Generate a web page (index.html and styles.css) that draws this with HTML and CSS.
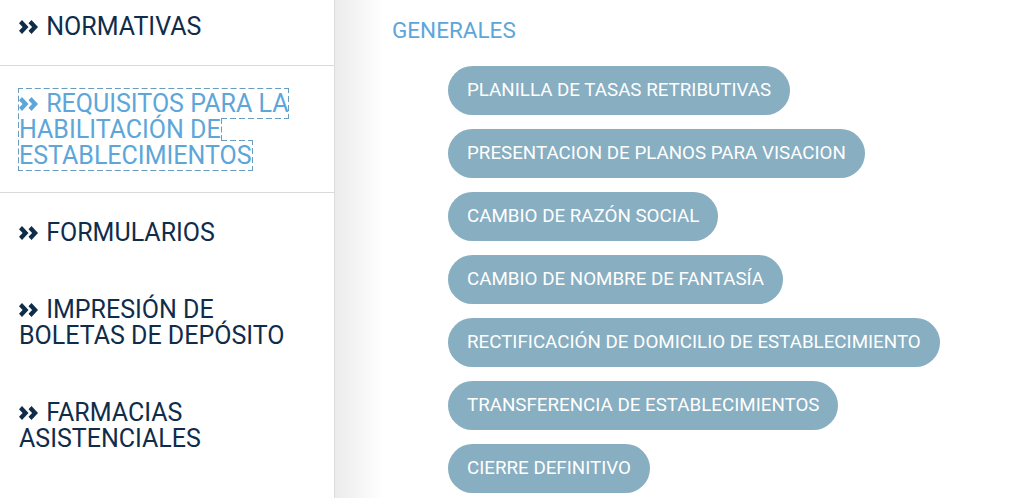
FILE: index.html
```html
<!DOCTYPE html>
<html lang="es">
<head>
    <meta charset="UTF-8">
    <meta name="viewport" content="width=device-width, initial-scale=1.0">
    <title>Requisitos para la habilitación de establecimientos</title>
    <link rel="stylesheet" href="styles.css">
</head>
<body>
    <div class="page">
        <nav class="sidebar">
            <div class="nav-item">
                <a href="#" class="nav-link">
                    <svg class="chevrons" viewBox="0 0 19 14"><polygon points="0,3.2 3,0 9.5,7 3,14 0,10.8 3.6,7"/><polygon points="9.5,3.2 12.5,0 19,7 12.5,14 9.5,10.8 13.1,7"/></svg>
                    NORMATIVAS
                </a>
            </div>
            <div class="nav-item active">
                <a href="#" class="nav-link">
                    <svg class="chevrons" viewBox="0 0 19 14"><polygon points="0,3.2 3,0 9.5,7 3,14 0,10.8 3.6,7"/><polygon points="9.5,3.2 12.5,0 19,7 12.5,14 9.5,10.8 13.1,7"/></svg>
                    REQUISITOS PARA LA HABILITACIÓN DE ESTABLECIMIENTOS</a>
            </div>
            <div class="nav-item">
                <a href="#" class="nav-link">
                    <svg class="chevrons" viewBox="0 0 19 14"><polygon points="0,3.2 3,0 9.5,7 3,14 0,10.8 3.6,7"/><polygon points="9.5,3.2 12.5,0 19,7 12.5,14 9.5,10.8 13.1,7"/></svg>
                    FORMULARIOS
                </a>
            </div>
            <div class="nav-item">
                <a href="#" class="nav-link">
                    <svg class="chevrons" viewBox="0 0 19 14"><polygon points="0,3.2 3,0 9.5,7 3,14 0,10.8 3.6,7"/><polygon points="9.5,3.2 12.5,0 19,7 12.5,14 9.5,10.8 13.1,7"/></svg>
                    IMPRESIÓN DE BOLETAS DE DEPÓSITO
                </a>
            </div>
            <div class="nav-item">
                <a href="#" class="nav-link">
                    <svg class="chevrons" viewBox="0 0 19 14"><polygon points="0,3.2 3,0 9.5,7 3,14 0,10.8 3.6,7"/><polygon points="9.5,3.2 12.5,0 19,7 12.5,14 9.5,10.8 13.1,7"/></svg>
                    FARMACIAS ASISTENCIALES
                </a>
            </div>
        </nav>

        <main class="content">
            <h2 class="section-title">GENERALES</h2>
            <div class="pill-list">
                <a href="#" class="pill">PLANILLA DE TASAS RETRIBUTIVAS</a>
                <a href="#" class="pill">PRESENTACION DE PLANOS PARA VISACION</a>
                <a href="#" class="pill">CAMBIO DE RAZÓN SOCIAL</a>
                <a href="#" class="pill">CAMBIO DE NOMBRE DE FANTASÍA</a>
                <a href="#" class="pill">RECTIFICACIÓN DE DOMICILIO DE ESTABLECIMIENTO</a>
                <a href="#" class="pill">TRANSFERENCIA DE ESTABLECIMIENTOS</a>
                <a href="#" class="pill">CIERRE DEFINITIVO</a>
            </div>
        </main>
    </div>
</body>
</html>
```

FILE: styles.css
```css
body {
    margin: 0;
    font-family: Roboto, 'Liberation Sans', sans-serif;
    background-color: #fff;
}

.page {
    display: flex;
    min-height: 100vh;
}

.sidebar {
    width: 334px;
    border-right: 1px solid #dcdcdc;
    background-color: #fff;
    flex-shrink: 0;
}

.nav-item {
    padding: 27px 18px 24px 19px;
    font-size: 25px;
    line-height: 26px;
}

.nav-item:first-child {
    padding-top: 14px;
    padding-bottom: 25px;
}

.nav-item.active {
    padding-top: 25px;
    padding-bottom: 23px;
    border-top: 1px solid #d9d9d9;
    border-bottom: 1px solid #d9d9d9;
}

.nav-link {
    color: #0f2c4a;
    text-decoration: none;
}

.nav-item.active .nav-link {
    color: #5ca6d9;
    outline: 1px dashed #6a9cc0;
    outline-offset: 0;
}

.chevrons {
    width: 19px;
    height: 14px;
    margin-right: 2px;
    vertical-align: 1px;
    fill: currentColor;
}

.content {
    flex: 1;
    padding: 17px 0 0 57px;
    background: linear-gradient(to right, #ebebeb, #fff 48px);
}

.section-title {
    margin: 0;
    font-size: 22.5px;
    line-height: 26px;
    font-weight: normal;
    color: #5ca6d9;
}

.pill-list {
    display: flex;
    flex-direction: column;
    align-items: flex-start;
    gap: 14px;
    margin: 23px 0 0 56px;
}

.pill {
    display: block;
    height: 49px;
    line-height: 49px;
    padding: 0 19px;
    border-radius: 25px;
    background-color: #87aec1;
    color: #fff;
    font-size: 18.75px;
    text-decoration: none;
    white-space: nowrap;
}
```
